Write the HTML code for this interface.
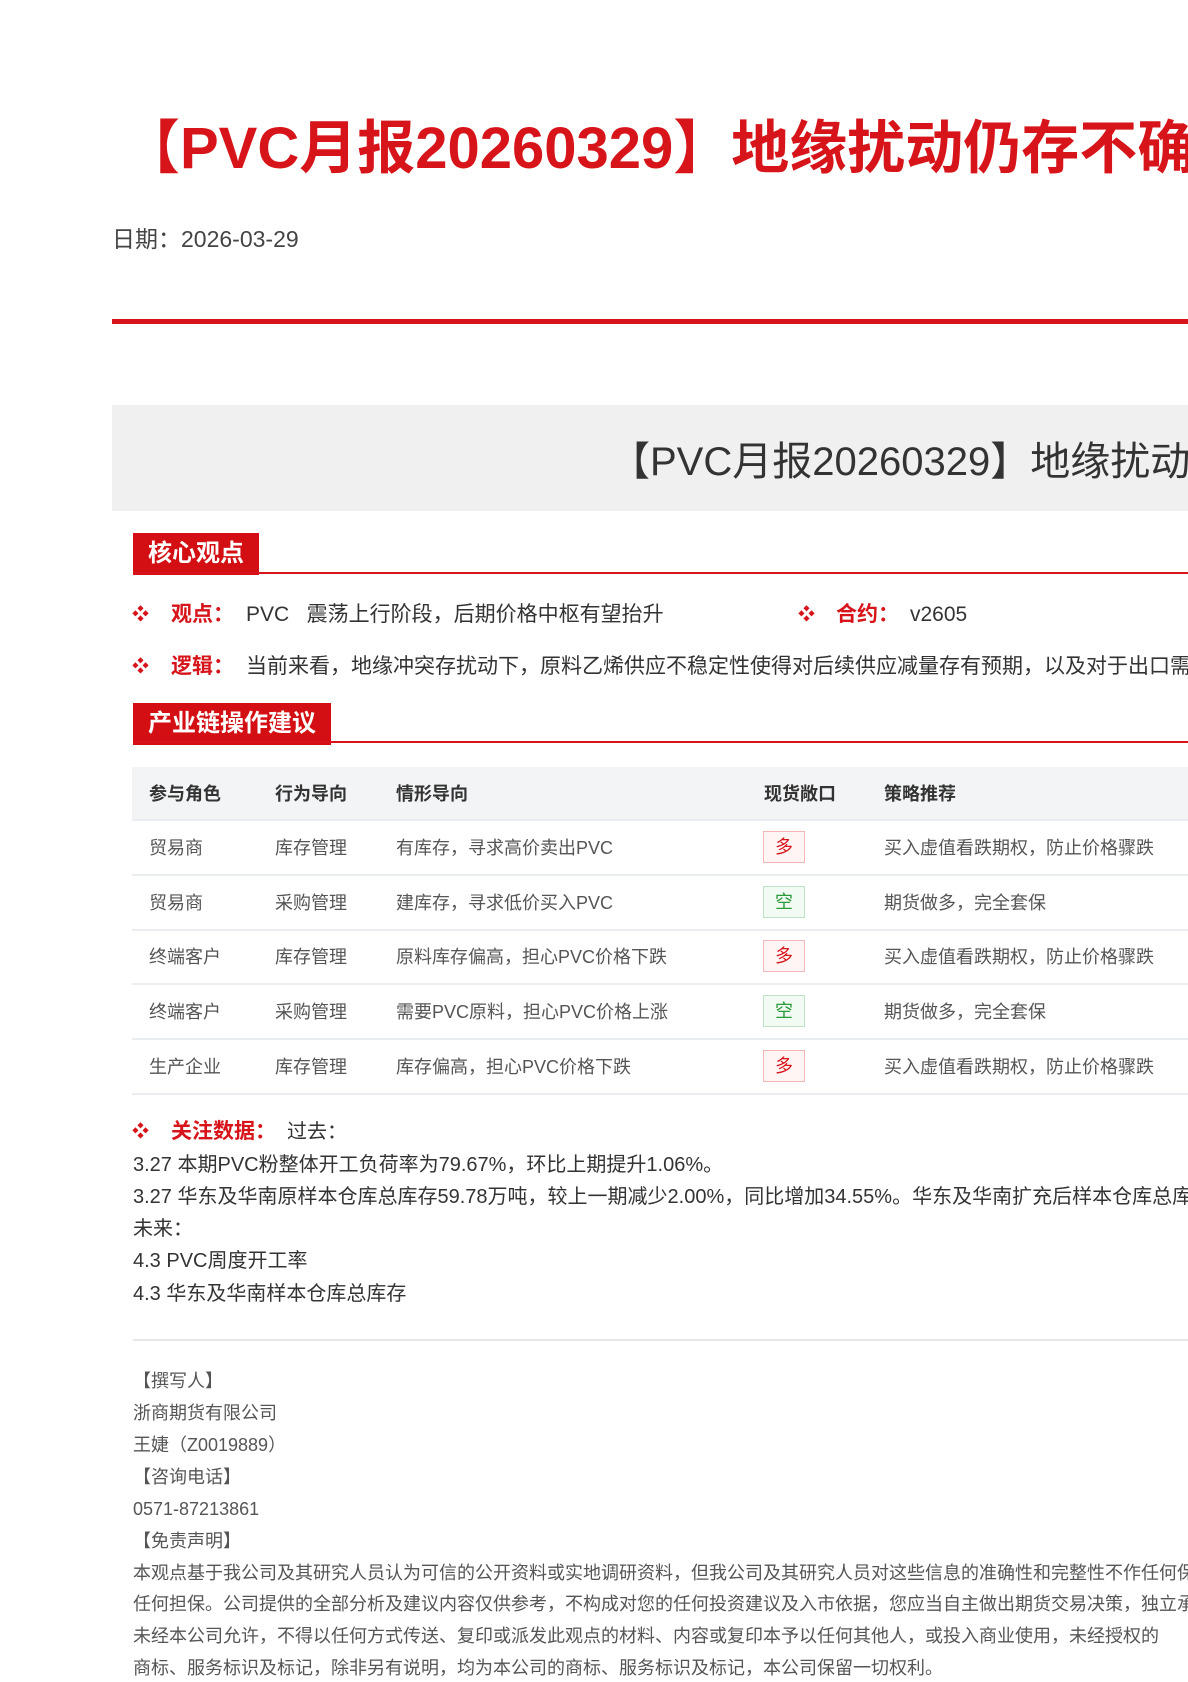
<!DOCTYPE html>
<html><head><meta charset="utf-8"><style>
html,body{margin:0;padding:0;}
body{width:1188px;height:1680px;overflow:hidden;position:relative;background:#fff;font-family:"Liberation Sans","Noto Sans CJK SC",sans-serif;white-space:nowrap;}
.a{position:absolute;line-height:28px;}
.title{left:122px;top:114px;font-size:58px;font-weight:bold;color:#d7141a;line-height:70px;}
.date{left:112px;top:224px;font-size:23px;color:#444;line-height:30px;}
.redline{left:112px;top:319px;width:1076px;height:5px;background:#d7141a;}
.gbox{left:112px;top:405px;width:1076px;height:106px;background:#f0f0f0;}
.gtitle{left:610px;top:434px;font-size:40px;color:#333;line-height:56px;}
.sec{background:#d40f14;color:#fff;font-weight:bold;font-size:24px;line-height:42px;padding:0 15px;}
.secline{height:2px;background:#d7141a;width:1060px;left:133px;}
.bul{color:#d7141a;font-size:17px;}
.lab{color:#d7141a;font-weight:bold;font-size:21px;}
.txt{font-size:21px;color:#333;}
.th{font-size:18px;color:#333;font-weight:bold;}
.td{font-size:18px;color:#555;}
.rowline{left:132px;width:1056px;height:2px;background:#eaedf2;}
.badge{width:40px;height:30px;border:1px solid;text-align:center;line-height:30px;font-size:18px;}
.r{color:#d7141a;border-color:#f5b4b6;background:#fff5f5;}
.g{color:#2a9a3a;border-color:#bfe3c4;background:#f2fbf3;}
.body{font-size:20px;color:#333;left:133px;}
.ft{font-size:18px;color:#555;left:133px;}
</style></head><body>
<div class="a title">【PVC月报20260329】地缘扰动仍存不确定性</div>
<div class="a date">日期：2026-03-29</div>
<div class="a redline"></div>
<div class="a gbox"></div>
<div class="a gtitle">【PVC月报20260329】地缘扰动仍存不确定性</div>

<div class="a sec" style="left:133px;top:533px;">核心观点</div>
<div class="a secline" style="top:572px;"></div>
<div class="a bul" style="left:132px;top:601px;">❖</div>
<div class="a lab" style="left:171px;top:601px;">观点：</div>
<div class="a txt" style="left:246px;top:601px;">PVC &nbsp;&nbsp;震荡上行阶段，后期价格中枢有望抬升</div>
<div class="a bul" style="left:798px;top:601px;">❖</div>
<div class="a lab" style="left:836px;top:601px;">合约：</div>
<div class="a txt" style="left:910px;top:601px;">v2605</div>
<div class="a bul" style="left:132px;top:653px;">❖</div>
<div class="a lab" style="left:171px;top:653px;">逻辑：</div>
<div class="a txt" style="left:246px;top:653px;">当前来看，地缘冲突存扰动下，原料乙烯供应不稳定性使得对后续供应减量存有预期，以及对于出口需求的支撑</div>

<div class="a sec" style="left:133px;top:703px;">产业链操作建议</div>
<div class="a secline" style="top:741px;"></div>

<div class="a" style="left:132px;top:767px;width:1056px;height:53px;background:#f3f4f6;"></div>
<div class="a th" style="left:149px;top:780px;">参与角色</div>
<div class="a th" style="left:275px;top:780px;">行为导向</div>
<div class="a th" style="left:396px;top:780px;">情形导向</div>
<div class="a th" style="left:764px;top:780px;">现货敞口</div>
<div class="a th" style="left:884px;top:780px;">策略推荐</div>
<div class="a rowline" style="top:819px;"></div>

<div class="a td" style="left:149px;top:834px;">贸易商</div><div class="a td" style="left:275px;top:834px;">库存管理</div><div class="a td" style="left:396px;top:834px;">有库存，寻求高价卖出PVC</div><div class="a badge r" style="left:763px;top:831px;">多</div><div class="a td" style="left:884px;top:834px;">买入虚值看跌期权，防止价格骤跌</div>
<div class="a rowline" style="top:874px;"></div>
<div class="a td" style="left:149px;top:889px;">贸易商</div><div class="a td" style="left:275px;top:889px;">采购管理</div><div class="a td" style="left:396px;top:889px;">建库存，寻求低价买入PVC</div><div class="a badge g" style="left:763px;top:886px;">空</div><div class="a td" style="left:884px;top:889px;">期货做多，完全套保</div>
<div class="a rowline" style="top:929px;"></div>
<div class="a td" style="left:149px;top:943px;">终端客户</div><div class="a td" style="left:275px;top:943px;">库存管理</div><div class="a td" style="left:396px;top:943px;">原料库存偏高，担心PVC价格下跌</div><div class="a badge r" style="left:763px;top:940px;">多</div><div class="a td" style="left:884px;top:943px;">买入虚值看跌期权，防止价格骤跌</div>
<div class="a rowline" style="top:983px;"></div>
<div class="a td" style="left:149px;top:998px;">终端客户</div><div class="a td" style="left:275px;top:998px;">采购管理</div><div class="a td" style="left:396px;top:998px;">需要PVC原料，担心PVC价格上涨</div><div class="a badge g" style="left:763px;top:995px;">空</div><div class="a td" style="left:884px;top:998px;">期货做多，完全套保</div>
<div class="a rowline" style="top:1038px;"></div>
<div class="a td" style="left:149px;top:1053px;">生产企业</div><div class="a td" style="left:275px;top:1053px;">库存管理</div><div class="a td" style="left:396px;top:1053px;">库存偏高，担心PVC价格下跌</div><div class="a badge r" style="left:763px;top:1050px;">多</div><div class="a td" style="left:884px;top:1053px;">买入虚值看跌期权，防止价格骤跌</div>
<div class="a rowline" style="top:1093px;"></div>

<div class="a bul" style="left:132px;top:1118px;">❖</div>
<div class="a lab" style="left:171px;top:1118px;">关注数据：</div>
<div class="a txt" style="left:287px;top:1118px;font-size:20px;">过去：</div>
<div class="a body" style="top:1151px;">3.27 本期PVC粉整体开工负荷率为79.67%，环比上期提升1.06%。</div>
<div class="a body" style="top:1183px;">3.27 华东及华南原样本仓库总库存59.78万吨，较上一期减少2.00%，同比增加34.55%。华东及华南扩充后样本仓库总库存</div>
<div class="a body" style="top:1215px;">未来：</div>
<div class="a body" style="top:1247px;">4.3 PVC周度开工率</div>
<div class="a body" style="top:1280px;">4.3 华东及华南样本仓库总库存</div>

<div class="a" style="left:133px;top:1339px;width:1055px;height:2px;background:#e8e8e8;"></div>
<div class="a ft" style="top:1367px;">【撰写人】</div>
<div class="a ft" style="top:1399px;">浙商期货有限公司</div>
<div class="a ft" style="top:1431px;">王婕（Z0019889）</div>
<div class="a ft" style="top:1463px;">【咨询电话】</div>
<div class="a ft" style="top:1495px;">0571-87213861</div>
<div class="a ft" style="top:1527px;">【免责声明】</div>
<div class="a ft" style="top:1559px;">本观点基于我公司及其研究人员认为可信的公开资料或实地调研资料，但我公司及其研究人员对这些信息的准确性和完整性不作任何保证</div>
<div class="a ft" style="top:1590px;">任何担保。公司提供的全部分析及建议内容仅供参考，不构成对您的任何投资建议及入市依据，您应当自主做出期货交易决策，独立承担</div>
<div class="a ft" style="top:1622px;">未经本公司允许，不得以任何方式传送、复印或派发此观点的材料、内容或复印本予以任何其他人，或投入商业使用，未经授权的</div>
<div class="a ft" style="top:1654px;">商标、服务标识及标记，除非另有说明，均为本公司的商标、服务标识及标记，本公司保留一切权利。</div>
</body></html>
